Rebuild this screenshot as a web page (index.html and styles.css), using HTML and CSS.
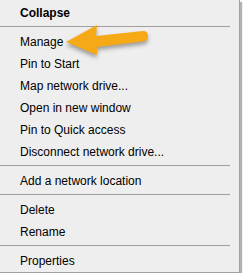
FILE: index.html
```html
<!DOCTYPE html>
<html lang="en">
<head>
<meta charset="UTF-8">
<title>Context menu</title>
<link rel="stylesheet" href="styles.css">
</head>
<body>
<div class="menu">
  <div class="item bold">Collapse</div>
  <div class="sep"></div>
  <div class="item">Manage</div>
  <div class="item">Pin to Start</div>
  <div class="item">Map network drive...</div>
  <div class="item">Open in new window</div>
  <div class="item">Pin to Quick access</div>
  <div class="item">Disconnect network drive...</div>
  <div class="sep"></div>
  <div class="item">Add a network location</div>
  <div class="sep"></div>
  <div class="item">Delete</div>
  <div class="item">Rename</div>
  <div class="sep"></div>
  <div class="item">Properties</div>
  <svg class="arrow" width="160" height="70" viewBox="0 0 160 70">
    <path d="M66 42 L97 25 L96 36 L143 31 Q148 31 148 36 Q148 41 143 41.5 L97 47 L97 55 Z" fill="#f6a916"/>
  </svg>
</div>
</body>
</html>
```

FILE: styles.css
```css
body {
  margin:0;
  background:#fff;
  font-family:'Liberation Sans', Arial, sans-serif;
  font-size:12px;
  color:#000;
}
.menu {
  position:relative;
  width:240px;
  height:273px;
  box-sizing:border-box;
  padding-top:2px;
  background:#eeeeee;
  border-right:1px solid #a0a0a0;
  border-bottom:1px solid #a0a0a0;
  box-shadow:2px 2px 1px rgba(0,0,0,0.3);
}
.item {height:22px; line-height:22px; padding-left:20px; white-space:nowrap;}
.bold {font-weight:bold;}
.sep {height:1px; width:230px; background:#a0a0a0; margin:2px 0 4px;}
.arrow {
  position:absolute;
  left:0;
  top:0;
  filter:drop-shadow(0 3px 2px rgba(0,0,0,0.35));
}
```
